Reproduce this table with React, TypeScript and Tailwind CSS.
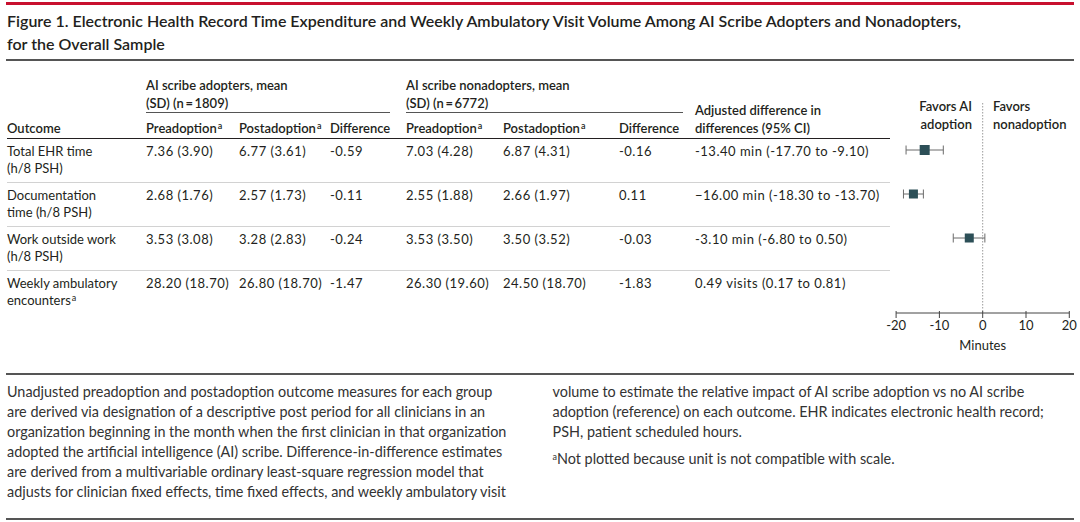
const rows = [
  {
    outcome: ['Total EHR time', '(h/8 PSH)'],
    vals: ['7.36 (3.90)', '6.77 (3.61)', '-0.59', '7.03 (4.28)', '6.87 (4.31)', '-0.16', '-13.40 min (-17.70 to -9.10)'],
  },
  {
    outcome: ['Documentation', 'time (h/8 PSH)'],
    vals: ['2.68 (1.76)', '2.57 (1.73)', '-0.11', '2.55 (1.88)', '2.66 (1.97)', '0.11', '\u221216.00 min (-18.30 to -13.70)'],
  },
  {
    outcome: ['Work outside work', '(h/8 PSH)'],
    vals: ['3.53 (3.08)', '3.28 (2.83)', '-0.24', '3.53 (3.50)', '3.50 (3.52)', '-0.03', '-3.10 min (-6.80 to 0.50)'],
  },
  {
    outcome: ['Weekly ambulatory', 'encounters'],
    sup: true,
    vals: ['28.20 (18.70)', '26.80 (18.70)', '-1.47', '26.30 (19.60)', '24.50 (18.70)', '-1.83', '0.49 visits (0.17 to 0.81)'],
  },
];

// forest plot points, y in svg coords (svg top = table top)
const points = [
  { y: 89, est: -13.4, lo: -17.7, hi: -9.1, size: 10 },
  { y: 133, est: -16, lo: -18.3, hi: -13.7, size: 9 },
  { y: 177, est: -3.1, lo: -6.8, hi: 0.5, size: 9 },
];
const X0 = 92.7;
const K = 4.33;
const sx = (v: number) => X0 + v * K;

const notesLeft = [
  'Unadjusted preadoption and postadoption outcome measures for each group',
  'are derived via designation of a descriptive post period for all clinicians in an',
  'organization beginning in the month when the first clinician in that organization',
  'adopted the artificial intelligence (AI) scribe. Difference-in-difference estimates',
  'are derived from a multivariable ordinary least-square regression model that',
  'adjusts for clinician fixed effects, time fixed effects, and weekly ambulatory visit',
];
const notesRight = [
  'volume to estimate the relative impact of AI scribe adoption vs no AI scribe',
  'adoption (reference) on each outcome. EHR indicates electronic health record;',
  'PSH, patient scheduled hours.',
];

function Sup() {
  return <sup className="text-[9px] ml-px">a</sup>;
}

function ForestPlot() {
  return (
    <svg width={184} height={312} viewBox="0 0 184 312" className="shrink-0 overflow-visible">
      {/* labels */}
      <g fontSize={13} fontWeight={600} fill="#231f20">
        <text x={82} y={47} textAnchor="end" dominantBaseline="middle">Favors AI</text>
        <text x={82} y={65} textAnchor="end" dominantBaseline="middle">adoption</text>
        <text x={103} y={47} dominantBaseline="middle">Favors</text>
        <text x={103} y={65} dominantBaseline="middle">nonadoption</text>
      </g>
      {/* zero line */}
      <line x1={X0} x2={X0} y1={42} y2={252} stroke="#9a9a9a" strokeWidth={1} strokeDasharray="1.5 1.5" />
      {/* whiskers + squares */}
      {points.map((p) => (
        <g key={p.y}>
          <line x1={sx(p.lo)} x2={sx(p.hi)} y1={p.y} y2={p.y} stroke="#6b6b6b" strokeWidth={1} />
          <line x1={sx(p.lo)} x2={sx(p.lo)} y1={p.y - 4.5} y2={p.y + 4.5} stroke="#6b6b6b" strokeWidth={1} />
          <line x1={sx(p.hi)} x2={sx(p.hi)} y1={p.y - 4.5} y2={p.y + 4.5} stroke="#6b6b6b" strokeWidth={1} />
          <rect x={sx(p.est) - p.size / 2} y={p.y - p.size / 2} width={p.size} height={p.size} fill="#2c4f57" />
        </g>
      ))}
      {/* axis */}
      <line x1={sx(-20)} x2={sx(20)} y1={252} y2={252} stroke="#444" strokeWidth={1} />
      {[-20, -10, 0, 10, 20].map((t) => (
        <g key={t}>
          <line x1={sx(t)} x2={sx(t)} y1={250} y2={257} stroke="#444" strokeWidth={1} />
          <text x={sx(t)} y={266} textAnchor="middle" dominantBaseline="middle" fontSize={13} fill="#231f20">
            {t < 0 ? `-${Math.abs(t)}` : t}
          </text>
        </g>
      ))}
      <text x={X0} y={286} textAnchor="middle" dominantBaseline="middle" fontSize={13} fill="#231f20">
        Minutes
      </text>
    </svg>
  );
}

export default function App() {
  const cols = 'grid grid-cols-[139px_93px_91px_76px_97px_116px_76px_195px]';
  return (
    <div className="w-[1080px] h-[522px] bg-white px-[6px] pt-[2px] font-['Lato','Noto_Sans',sans-serif] text-[#231f20] overflow-hidden">
      <div className="h-[3px] bg-[#c8102e]" />
      <h1 className="pt-[4px] pb-[4px] pl-px text-[16px] leading-[23px] font-semibold border-b-2 border-[#555]">
        Figure 1. Electronic Health Record Time Expenditure and Weekly Ambulatory Visit Volume Among AI Scribe Adopters and Nonadopters,
        <br />
        for the Overall Sample
      </h1>

      <div className="flex h-[312px]">
        {/* table */}
        <div className="w-[884px] shrink-0 pl-px text-[13px]">
          <div className={`${cols} pt-[15px] pb-px leading-[18px] font-semibold border-b border-[#231f20]`}>
            <div className="col-start-2 col-span-3 row-start-1 mr-[16px] border-b border-[#555]">
              AI scribe adopters, mean
              <br />
              (SD) (n&thinsp;=&thinsp;1809)
            </div>
            <div className="col-start-5 col-span-3 row-start-1 mr-[12px] border-b border-[#555]">
              AI scribe nonadopters, mean
              <br />
              (SD) (n&thinsp;=&thinsp;6772)
            </div>
            <div className="col-start-8 row-start-1 row-span-2 self-end">
              Adjusted difference in
              <br />
              differences (95% CI)
            </div>
            <div className="row-start-2 col-start-1 mt-[6px]">Outcome</div>
            <div className="row-start-2 col-start-2 mt-[6px]">Preadoption<Sup /></div>
            <div className="row-start-2 col-start-3 mt-[6px]">Postadoption<Sup /></div>
            <div className="row-start-2 col-start-4 mt-[6px]">Difference</div>
            <div className="row-start-2 col-start-5 mt-[6px]">Preadoption<Sup /></div>
            <div className="row-start-2 col-start-6 mt-[6px]">Postadoption<Sup /></div>
            <div className="row-start-2 col-start-7 mt-[6px]">Difference</div>
          </div>
          {rows.map((r, i) => (
            <div
              key={r.outcome[0]}
              className={`${cols} pt-[4px] pb-[5px] leading-[17px] ${i < rows.length - 1 ? 'border-b border-[#d2d2d2]' : ''}`}
            >
              <div>
                {r.outcome[0]}
                <br />
                {r.outcome[1]}
                {r.sup && <Sup />}
              </div>
              {r.vals.map((v, j) => (
                <div key={j} className="whitespace-nowrap tracking-[0.5px]">
                  {v}
                </div>
              ))}
            </div>
          ))}
        </div>
        <ForestPlot />
      </div>

      {/* footnote */}
      <div className="h-[147px] border-t-2 border-b-2 border-[#555] pt-[7px] pl-px grid grid-cols-2 gap-6 text-[14.4px] leading-[20px] text-[#333]">
        <div>
          {notesLeft.map((l) => (
            <div key={l} className="whitespace-nowrap">{l}</div>
          ))}
        </div>
        <div>
          {notesRight.map((l) => (
            <div key={l} className="whitespace-nowrap">{l}</div>
          ))}
          <div className="mt-[7px] whitespace-nowrap">
            <sup className="text-[9px]">a</sup>Not plotted because unit is not compatible with scale.
          </div>
        </div>
      </div>
    </div>
  );
}
